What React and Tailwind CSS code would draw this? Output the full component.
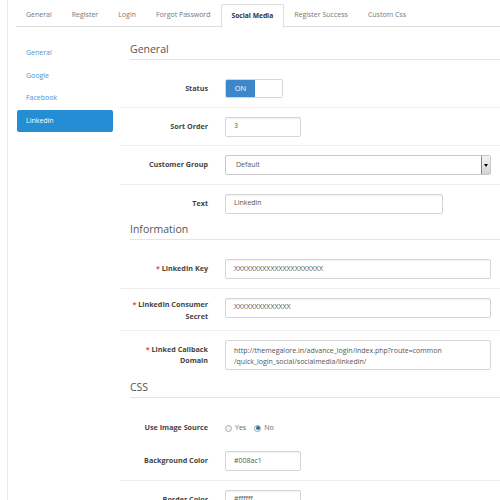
import React from 'react';

const tabs = ['General', 'Register', 'Login', 'Forgot Password', 'Social Media', 'Register Success', 'Custom Css'];
const sideItems = ['General', 'Google', 'Facebook', 'Linkedin'];

function Heading({ children, className = '' }) {
  return (
    <div className={`ml-[10px] border-b border-[#e5e5e5] pb-[2px] mb-[10px] text-[10.5px] leading-[16px] text-[#555] ${className}`}>
      {children}
    </div>
  );
}

function Row({ label, required, border = true, children, labelClass = 'pt-[3px] leading-[13px]' }) {
  return (
    <div className={`flex items-start pt-[9px] pb-[8.5px] ${border ? 'border-b border-[#eee]' : ''}`}>
      <div className={`w-[88px] shrink-0 text-right font-bold text-[7.2px] text-[#444] ${labelClass}`}>
        {required && <span className="text-[#e3503e]">* </span>}
        {label}
      </div>
      <div className="ml-[17px] flex-1 mr-[9px] flex">{children}</div>
    </div>
  );
}

function Input({ value, className = '' }) {
  return (
    <div className={`h-[20px] border border-[#d5d5d5] rounded-[2px] bg-white shadow-[inset_0_1px_1px_rgba(0,0,0,0.06)] flex items-center pl-[8px] text-[7px] text-[#555] ${className}`}>
      {value}
    </div>
  );
}

export default function App() {
  return (
    <div className="w-[500px] h-[500px] overflow-hidden bg-white" style={{ fontFamily: '"Open Sans", sans-serif' }}>
      <div className="ml-[7px] h-full border-l border-[#e8e8e8]">
        {/* tabs */}
        <div className="ml-[8px] pt-[4px] flex border-b border-[#ddd] h-[27px]">
          {tabs.map(t => (
            <div
              key={t}
              className={`h-[23px] flex items-center whitespace-nowrap ${
                t === 'Social Media'
                  ? 'px-[10px] border border-[#ddd] border-b-white bg-white -mb-px h-[24px] font-bold text-[6.7px] text-[#333] rounded-t-[2px]'
                  : 'px-[10px] text-[7px] text-[#777]'
              }`}
            >
              {t}
            </div>
          ))}
        </div>

        <div className="flex">
          {/* sidebar */}
          <div className="w-[112px] shrink-0 pl-[9px] pt-[15px]">
            {sideItems.map(s => (
              <div
                key={s}
                className={`w-[96px] h-[22.6px] flex items-center pl-[9px] text-[7px] rounded-[2px] ${
                  s === 'Linkedin' ? 'bg-[#248dd3] text-white' : 'text-[#4a93d0]'
                }`}
              >
                {s}
              </div>
            ))}
          </div>

          {/* content */}
          <div className="flex-1 pt-[14px]">
            <Heading>General</Heading>

            <Row label="Status">
              <div className="flex h-[19px] w-[58px] border border-[#d5d5d5] rounded-[2px] overflow-hidden">
                <div className="w-[29px] bg-[#3b87c9] text-white text-[7.5px] flex items-center justify-center">ON</div>
                <div className="flex-1 bg-white"></div>
              </div>
            </Row>

            <Row label="Sort Order">
              <Input value="3" className="w-[76px]" />
            </Row>

            <Row label="Customer Group">
              <div className="h-[20px] flex-1 border border-[#c8c8c8] rounded-[2px] flex items-center pl-[10px] text-[7px] text-[#555] relative">
                Default
                <div className="absolute right-0 top-0 bottom-0 w-[9px] border-l border-[#888] bg-gradient-to-b from-[#f4f4f4] to-[#d4d4d4] flex items-center justify-center">
                  <div className="w-0 h-0 border-l-[2px] border-r-[2px] border-t-[3px] border-l-transparent border-r-transparent border-t-black"></div>
                </div>
              </div>
            </Row>

            <Row label="Text" border={false}>
              <Input value="Linkedin" className="w-[218px]" />
            </Row>

            <Heading className="-mt-[1px]">Information</Heading>

            <Row label="LinkedIn Key" required>
              <Input value="XXXXXXXXXXXXXXXXXXXXXX" className="flex-1" />
            </Row>

            <Row label={<>LinkedIn Consumer<br />Secret</>} required labelClass="leading-[12px]">
              <Input value="XXXXXXXXXXXXXX" className="flex-1" />
            </Row>

            <Row label={<>Linked Callback<br />Domain</>} required border={false} labelClass="pt-[4px] leading-[11px]">
              <div className="h-[30px] flex-1 border border-[#d5d5d5] rounded-[2px] pl-[8px] pt-[4px] text-[7px] leading-[11px] text-[#555]">
                http://themegalore.in/advance_login/index.php?route=common
                <br />
                /quick_login_social/socialmedia/linkedin/
              </div>
            </Row>

            <Heading>CSS</Heading>

            <Row label="Use Image Source" border={false} labelClass="pt-[4px] leading-[13px] h-[17px]">
              <div className="flex items-center h-[17px] pt-[6px] text-[7px] text-[#666]">
                <span className="w-[7px] h-[7px] rounded-full border border-[#aaa] bg-[#f5f5f5] mr-[3px]"></span>
                Yes
                <span className="ml-[8px] w-[7px] h-[7px] rounded-full border border-[#8aa] bg-white flex items-center justify-center mr-[3px]">
                  <span className="w-[4px] h-[4px] rounded-full bg-[#2f6fb5]"></span>
                </span>
                No
              </div>
            </Row>

            <Row label="Background Color">
              <Input value="#008ac1" className="w-[76px]" />
            </Row>

            <Row label="Border Color">
              <Input value="#ffffff" className="w-[76px]" />
            </Row>
          </div>
        </div>
      </div>
    </div>
  );
}
